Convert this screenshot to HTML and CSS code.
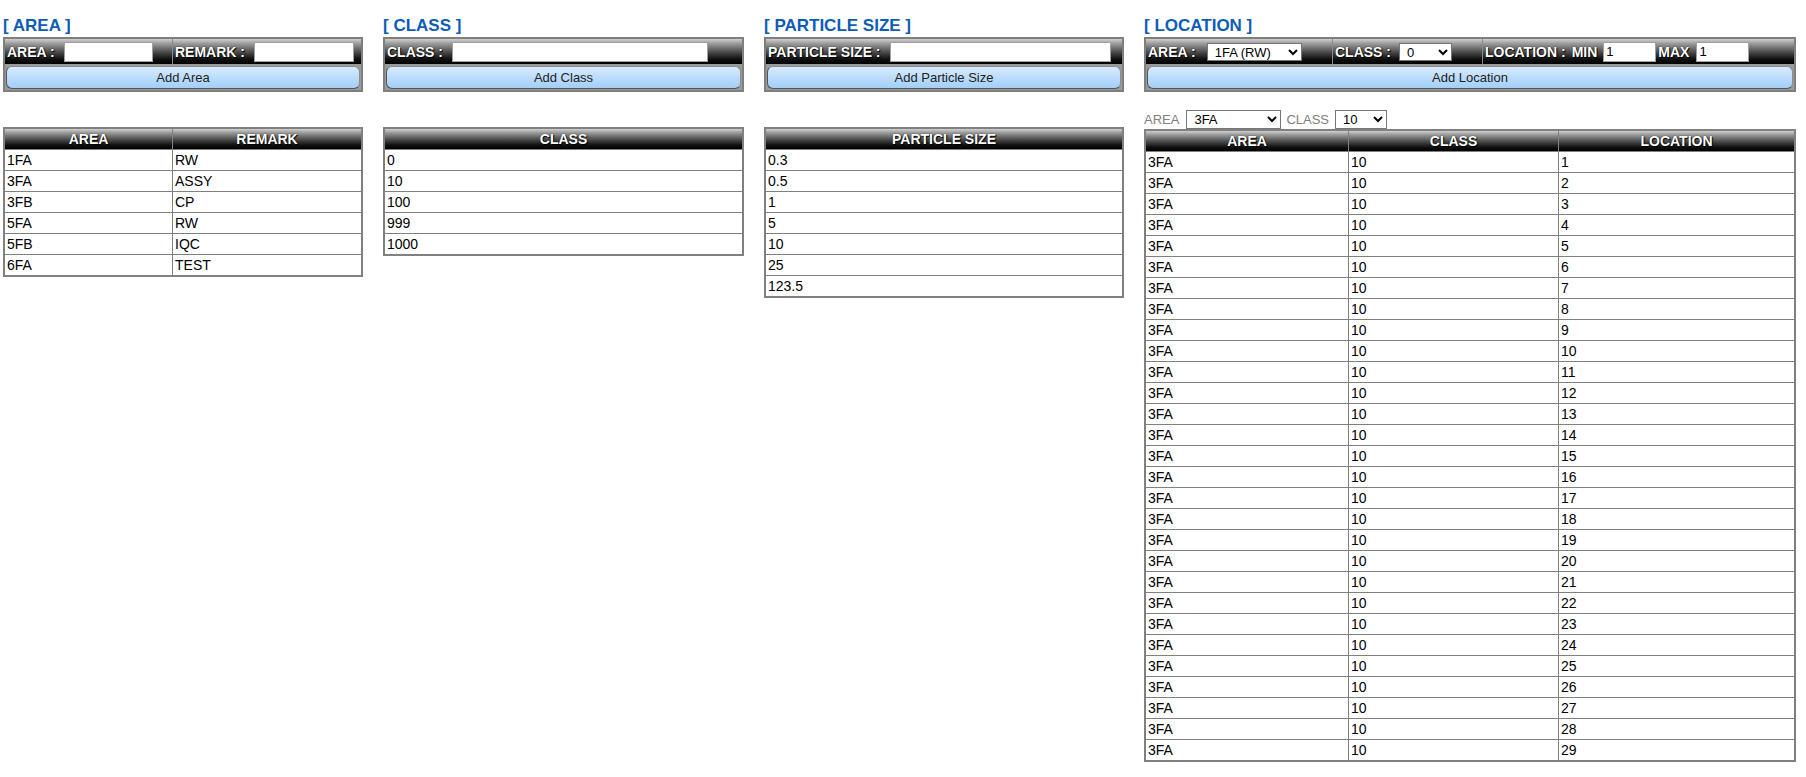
FILE: index.html
```
<!DOCTYPE html>
<html>
<head>
<meta charset="utf-8">
<title>Setting</title>
<link rel="stylesheet" href="styles.css">
</head>
<body>
<div class="page">
  <section class="col">
    <h2 class="title">[ AREA ]</h2>
    <div class="panel">
      <div class="hdr">
        <div class="cell c-area"><span class="lbl">AREA :</span><input class="in-area" type="text"></div>
        <div class="cell"><span class="lbl">REMARK :</span><input class="in-remark" type="text"></div>
      </div>
      <div class="btnrow"><button class="btn" type="button">Add Area</button></div>
    </div>
    <table class="grid">
      <colgroup><col class="w-area1"><col></colgroup>
      <thead><tr><th>AREA</th><th>REMARK</th></tr></thead>
      <tbody>
        <tr><td>1FA</td><td>RW</td></tr>
        <tr><td>3FA</td><td>ASSY</td></tr>
        <tr><td>3FB</td><td>CP</td></tr>
        <tr><td>5FA</td><td>RW</td></tr>
        <tr><td>5FB</td><td>IQC</td></tr>
        <tr><td>6FA</td><td>TEST</td></tr>
      </tbody>
    </table>
  </section>

  <section class="col">
    <h2 class="title">[ CLASS ]</h2>
    <div class="panel">
      <div class="hdr">
        <div class="cell"><span class="lbl">CLASS :</span><input class="in-class" type="text"></div>
      </div>
      <div class="btnrow"><button class="btn" type="button">Add Class</button></div>
    </div>
    <table class="grid">
      <thead><tr><th>CLASS</th></tr></thead>
      <tbody>
        <tr><td>0</td></tr>
        <tr><td>10</td></tr>
        <tr><td>100</td></tr>
        <tr><td>999</td></tr>
        <tr><td>1000</td></tr>
      </tbody>
    </table>
  </section>

  <section class="col">
    <h2 class="title">[ PARTICLE SIZE ]</h2>
    <div class="panel">
      <div class="hdr">
        <div class="cell"><span class="lbl">PARTICLE SIZE :</span><input class="in-particle" type="text"></div>
      </div>
      <div class="btnrow"><button class="btn" type="button">Add Particle Size</button></div>
    </div>
    <table class="grid">
      <thead><tr><th>PARTICLE SIZE</th></tr></thead>
      <tbody>
        <tr><td>0.3</td></tr>
        <tr><td>0.5</td></tr>
        <tr><td>1</td></tr>
        <tr><td>5</td></tr>
        <tr><td>10</td></tr>
        <tr><td>25</td></tr>
        <tr><td>123.5</td></tr>
      </tbody>
    </table>
  </section>

  <section class="col">
    <h2 class="title">[ LOCATION ]</h2>
    <div class="panel">
      <div class="hdr">
        <div class="cell c-larea"><span class="lbl">AREA :</span><select class="sel sel-larea"><option>1FA (RW)</option></select></div>
        <div class="cell c-lclass"><span class="lbl">CLASS :</span><select class="sel sel-lclass"><option>0</option></select></div>
        <div class="cell"><span class="lbl">LOCATION :</span><span class="lbl lbl-min">MIN</span><input class="in-min" type="text" value="1"><span class="lbl lbl-max">MAX</span><input class="in-max" type="text" value="1"></div>
      </div>
      <div class="btnrow"><button class="btn" type="button">Add Location</button></div>
    </div>
    <div class="filter">
      <span>AREA</span>
      <select class="fsel fsel-area"><option>3FA</option></select>
      <span class="f-class">CLASS</span>
      <select class="fsel fsel-class"><option>10</option></select>
    </div>
    <table class="grid grid-loc">
      <colgroup><col class="w-loc1"><col class="w-loc2"><col></colgroup>
      <thead><tr><th>AREA</th><th>CLASS</th><th>LOCATION</th></tr></thead>
      <tbody>
        <tr><td>3FA</td><td>10</td><td>1</td></tr>
        <tr><td>3FA</td><td>10</td><td>2</td></tr>
        <tr><td>3FA</td><td>10</td><td>3</td></tr>
        <tr><td>3FA</td><td>10</td><td>4</td></tr>
        <tr><td>3FA</td><td>10</td><td>5</td></tr>
        <tr><td>3FA</td><td>10</td><td>6</td></tr>
        <tr><td>3FA</td><td>10</td><td>7</td></tr>
        <tr><td>3FA</td><td>10</td><td>8</td></tr>
        <tr><td>3FA</td><td>10</td><td>9</td></tr>
        <tr><td>3FA</td><td>10</td><td>10</td></tr>
        <tr><td>3FA</td><td>10</td><td>11</td></tr>
        <tr><td>3FA</td><td>10</td><td>12</td></tr>
        <tr><td>3FA</td><td>10</td><td>13</td></tr>
        <tr><td>3FA</td><td>10</td><td>14</td></tr>
        <tr><td>3FA</td><td>10</td><td>15</td></tr>
        <tr><td>3FA</td><td>10</td><td>16</td></tr>
        <tr><td>3FA</td><td>10</td><td>17</td></tr>
        <tr><td>3FA</td><td>10</td><td>18</td></tr>
        <tr><td>3FA</td><td>10</td><td>19</td></tr>
        <tr><td>3FA</td><td>10</td><td>20</td></tr>
        <tr><td>3FA</td><td>10</td><td>21</td></tr>
        <tr><td>3FA</td><td>10</td><td>22</td></tr>
        <tr><td>3FA</td><td>10</td><td>23</td></tr>
        <tr><td>3FA</td><td>10</td><td>24</td></tr>
        <tr><td>3FA</td><td>10</td><td>25</td></tr>
        <tr><td>3FA</td><td>10</td><td>26</td></tr>
        <tr><td>3FA</td><td>10</td><td>27</td></tr>
        <tr><td>3FA</td><td>10</td><td>28</td></tr>
        <tr><td>3FA</td><td>10</td><td>29</td></tr>
      </tbody>
    </table>
  </section>
</div>
</body>
</html>
```
FILE: styles.css
```
* { box-sizing: border-box; }

body {
  margin: 0;
  background: #fff;
  color: #000;
  font-family: "Liberation Sans", Arial, sans-serif;
}

.page {
  display: grid;
  grid-template-columns: 360px 361px 360px 652px;
  column-gap: 20px;
  align-items: start;
  padding: 16px 0 0 3px;
}

.col {
  display: flex;
  flex-direction: column;
}

.title {
  margin: 0 0 1px;
  font-size: 17px;
  line-height: 20px;
  font-weight: bold;
  color: #0c5cb8;
}

/* form panel */
.panel {
  border: 2px solid #7f7f7f;
  background: #9a9a9a;
}

.hdr {
  display: flex;
  height: 25px;
  background: linear-gradient(to bottom, #d0d0d0 0%, #9c9c9c 18%, #4c4c4c 52%, #111 80%, #000 100%);
}

.cell {
  display: flex;
  align-items: center;
  padding-left: 2px;
  border-right: 1px solid #8a8a8a;
  white-space: nowrap;
}

.cell:last-child {
  border-right: 0;
  flex: 1;
}

.c-area { width: 168px; }
.c-larea { width: 187px; }
.c-lclass { width: 150px; }

.lbl {
  color: #fff;
  font-size: 14px;
  font-weight: bold;
  text-shadow: 0 0 1px #000, 1px 1px 1px #000;
}

.hdr input {
  height: 20px;
  margin: 0 0 0 9px;
  padding: 0 2px;
  border: 1px solid #a0a0a0;
  background: #fff;
  font: 13px "Liberation Sans", Arial, sans-serif;
  color: #000;
}

.in-area { width: 89px; }
.in-remark { width: 100px; }
.in-class { width: 256px; }
.in-particle { width: 221px; }

.hdr .in-min { width: 53px; margin-left: 6px; }
.hdr .in-max { width: 53px; margin-left: 7px; }
.lbl-min { margin-left: 6px; }
.lbl-max { margin-left: 2px; }

.sel {
  height: 18px;
  margin: 0 0 0 9px;
  padding: 0 0 0 3px;
  border: 1px solid #767676;
  border-radius: 0;
  background-color: #fff;
  font: 13px "Liberation Sans", Arial, sans-serif;
  color: #000;
}

.sel-larea { width: 95px; margin-left: 11px; }
.sel-lclass { width: 53px; margin-left: 8px; }

.btnrow {
  padding: 2px 1px 1px;
}

.btn {
  display: block;
  width: 100%;
  height: 23px;
  margin: 0;
  padding: 0;
  border: 1px solid #8c8c8c;
  border-left-color: #555;
  border-bottom-color: #555;
  border-radius: 6px;
  background: linear-gradient(to bottom, #d8ecfd 0%, #bcdcfb 50%, #a2cff8 100%);
  font: 13px "Liberation Sans", Arial, sans-serif;
  color: #222;
}

/* location filter */
.filter {
  display: flex;
  align-items: center;
  height: 19px;
  margin-top: 18px;
  font-size: 13px;
  color: #808080;
}

.fsel {
  height: 19px;
  padding: 0 0 0 3px;
  border: 1px solid #767676;
  border-radius: 0;
  background-color: #fff;
  font: 13px "Liberation Sans", Arial, sans-serif;
  color: #000;
}

.fsel-area { width: 95px; margin-left: 7px; }
.f-class { margin-left: 5px; }
.fsel-class { width: 52px; margin-left: 6px; }

/* data tables */
.grid {
  width: 100%;
  margin-top: 35px;
  border: 2px solid #808080;
  border-collapse: separate;
  border-spacing: 0;
  table-layout: fixed;
}

.grid-loc { margin-top: 0; }

.w-area1 { width: 167px; }
.w-loc1 { width: 202px; }
.w-loc2 { width: 210px; }

.grid th {
  height: 21px;
  padding: 0;
  line-height: 20px;
  border-bottom: 1px solid #808080;
  border-left: 1px solid #808080;
  background: linear-gradient(to bottom, #d0d0d0 0%, #9c9c9c 18%, #4c4c4c 52%, #111 80%, #000 100%);
  color: #fff;
  font-size: 14px;
  font-weight: bold;
  text-align: center;
  text-shadow: 0 0 1px #000, 1px 1px 1px #000;
}

.grid td {
  height: 21px;
  padding: 0 2px;
  line-height: 20px;
  border-bottom: 1px solid #808080;
  border-left: 1px solid #808080;
  font-size: 14px;
  text-align: left;
  white-space: nowrap;
}

.grid th:first-child,
.grid td:first-child {
  border-left: 0;
}

.grid tbody tr:last-child td {
  border-bottom: 0;
  height: 20px;
}
```
